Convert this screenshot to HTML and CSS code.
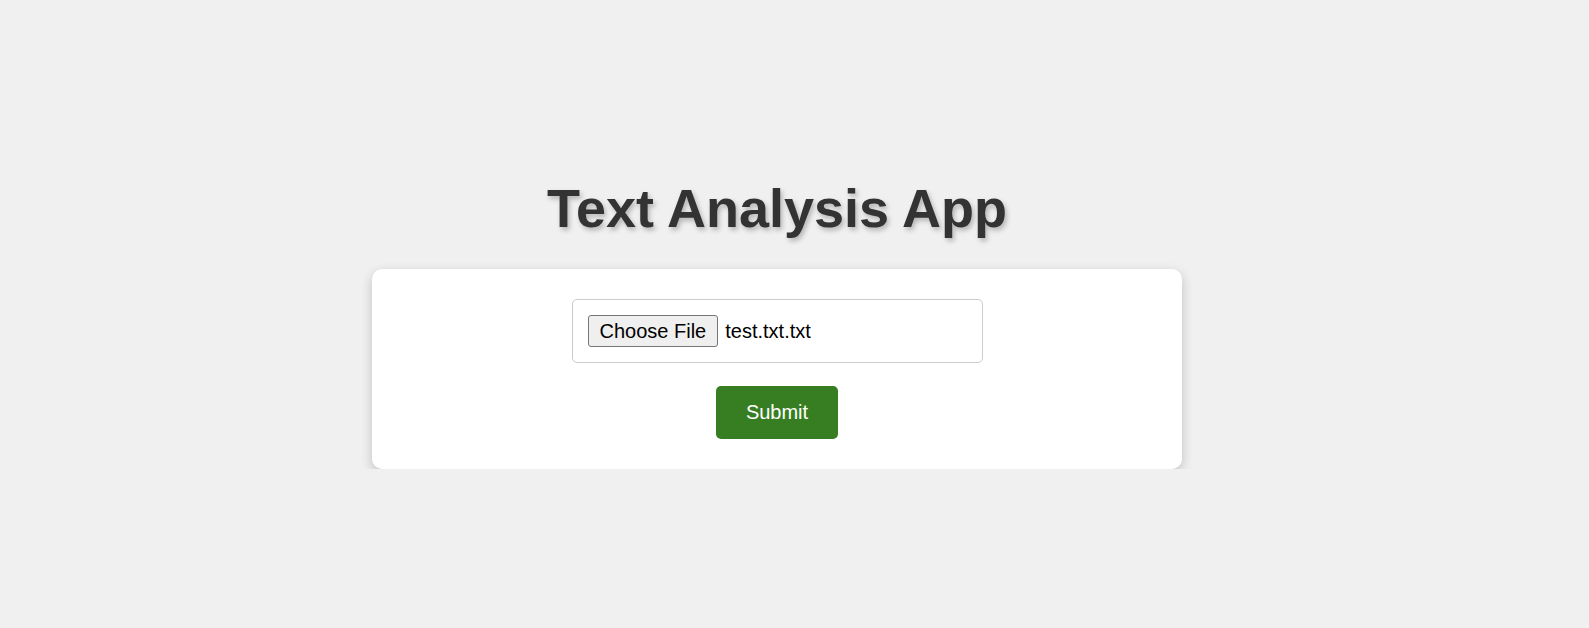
FILE: index.html
```html
<!DOCTYPE html>
<html lang="en">
<head>
<meta charset="utf-8">
<title>Text Analysis App</title>
<link rel="stylesheet" href="styles.css">
</head>
<body>
<main class="page">
  <h1 class="title">Text Analysis App</h1>
  <form class="card">
    <div class="file-field">
      <span class="choose-btn">Choose File</span>
      <span class="file-name">test.txt.txt</span>
    </div>
    <button type="button" class="submit">Submit</button>
  </form>
</main>
</body>
</html>
```
FILE: styles.css
```css
html, body {
  margin: 0;
  padding: 0;
}
body {
  background: #f0f0f0;
  font-family: "Liberation Sans", Arial, sans-serif;
  color: #333;
}
.page {
  padding: 178px 35px 0 0;
  display: flex;
  flex-direction: column;
  align-items: center;
}
.title {
  margin: 0 0 30px;
  font-size: 54px;
  line-height: 61px;
  font-weight: bold;
  color: #333;
  text-shadow: 2px 3px 5px rgba(0, 0, 0, 0.25);
}
.card {
  box-sizing: border-box;
  width: 810px;
  padding: 30px;
  margin: 0;
  background: #fff;
  border-radius: 10px;
  box-shadow: 0 4px 12px rgba(0, 0, 0, 0.2);
  display: flex;
  flex-direction: column;
  align-items: center;
  gap: 23px;
}
.file-field {
  box-sizing: border-box;
  width: 411px;
  height: 64px;
  padding: 15px;
  border: 1px solid #ccc;
  border-radius: 5px;
  display: flex;
  align-items: center;
  font-size: 20px;
  color: #000;
}
.choose-btn {
  box-sizing: border-box;
  height: 32px;
  padding: 0 11px;
  line-height: 30px;
  border: 1px solid #767676;
  border-radius: 3px;
  background: #efefef;
  margin-right: 7px;
}
.file-name {
  line-height: 30px;
}
.submit {
  box-sizing: border-box;
  height: 53px;
  padding: 0 30px;
  border: none;
  border-radius: 5px;
  background: #377e22;
  color: #fff;
  font-family: "Liberation Sans", Arial, sans-serif;
  font-size: 20px;
  line-height: 53px;
}
```
